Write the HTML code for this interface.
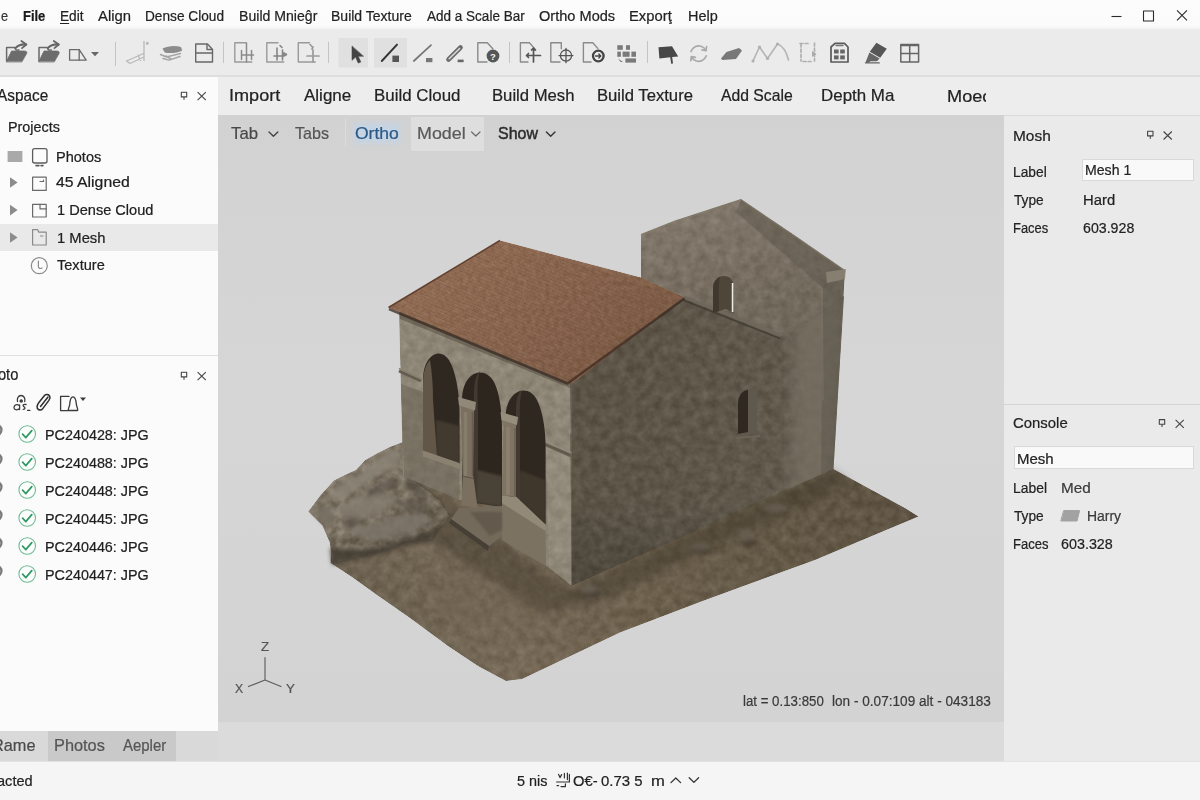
<!DOCTYPE html>
<html lang="en">
<head>
<meta charset="utf-8">
<title>Aspace - Photogrammetry</title>
<style>
*{box-sizing:border-box;margin:0;padding:0}
html,body{width:1200px;height:800px;overflow:hidden;background:#f1f1f1;font-family:"Liberation Sans","DejaVu Sans",sans-serif;color:#222}
.abs{position:absolute}
#app{position:relative;width:1200px;height:800px;overflow:hidden}
.t{position:absolute;white-space:nowrap;line-height:1;color:#262626;transform-origin:0 0;-webkit-text-stroke:0.22px currentColor}
#menubar{left:0;top:0;width:1200px;height:30px;background:linear-gradient(180deg,#fcfcfc 0,#fbfbfb 26px,#f4f4f4 28.5px,#ebebeb 30px)}
#toolbar{left:0;top:30px;width:1200px;height:47px;background:#ebebeb;border-bottom:2px solid #dedede}
#subbar{left:218px;top:77px;width:982px;height:38px;background:#ededed}
#left{left:0;top:77px;width:218px;height:654px;background:#fbfbfb}
#lefttabs{left:0;top:731px;width:218px;height:30px;background:#d9d9d9}
#viewport{left:218px;top:115px;width:786px;height:607px;background:linear-gradient(180deg,#d2d2d2 0%,#d6d6d6 45%,#d3d3d3 100%)}
#vpstrip{left:218px;top:722px;width:786px;height:39px;background:#dbdbdb}
#right{left:1004px;top:115px;width:196px;height:646px;background:#eaeaea;border-top:1px solid #dadada}
#status{left:0;top:761px;width:1200px;height:39px;background:#f5f5f5;border-top:1px solid #e2e2e2}
.inp{position:absolute;background:#f9f9f9;border:1px solid #d9d9d9}
#ico{position:absolute;left:0;top:0;width:1200px;height:800px;pointer-events:none}
</style>
</head>
<body>
<div id="app">
<!-- MENU BAR -->
<div id="menubar" class="abs"></div>
<div id="toolbar" class="abs"></div>
<span class="t" style="left:1.49px;top:7.55px;font-size:15.3px;transform:scaleX(0.8344);color:#333;">e</span>
<span class="t" style="left:23.16px;top:7.55px;font-size:15.3px;transform:scaleX(0.8473);color:#1a1a1a;font-weight:bold;">File</span>
<span class="t" style="left:59.61px;top:7.55px;font-size:15.3px;transform:scaleX(0.8914);color:#222;"><u style="text-decoration-thickness:1.3px;text-underline-offset:2px">E</u>dit</span>
<span class="t" style="left:98.00px;top:7.55px;font-size:15.3px;transform:scaleX(0.9683);color:#222;">Align</span>
<span class="t" style="left:144.91px;top:7.55px;font-size:15.3px;transform:scaleX(0.8931);color:#222;">Dense Cloud</span>
<span class="t" style="left:238.87px;top:7.55px;font-size:15.3px;transform:scaleX(0.9217);color:#222;">Build Mnie&#x11D;r</span>
<span class="t" style="left:330.88px;top:7.55px;font-size:15.3px;transform:scaleX(0.9163);color:#222;">Build Texture</span>
<span class="t" style="left:427.00px;top:7.55px;font-size:15.3px;transform:scaleX(0.8838);color:#222;">Add a Scale Bar</span>
<span class="t" style="left:539.34px;top:7.55px;font-size:15.3px;transform:scaleX(0.9528);color:#222;">Ortho Mods</span>
<span class="t" style="left:629.32px;top:7.55px;font-size:15.3px;transform:scaleX(0.9670);color:#222;">Expor&#x163;</span>
<span class="t" style="left:687.84px;top:7.55px;font-size:15.3px;transform:scaleX(0.9458);color:#222;">Help</span>
<!-- SUB BAR -->
<div id="subbar" class="abs"></div>
<span class="t" style="left:228.87px;top:87.31px;font-size:17px;transform:scaleX(1.0646);color:#222;">Import</span>
<span class="t" style="left:304.00px;top:87.31px;font-size:17px;transform:scaleX(1.0001);color:#222;">Aligne</span>
<span class="t" style="left:373.65px;top:87.31px;font-size:17px;transform:scaleX(0.9942);color:#222;">Build Cloud</span>
<span class="t" style="left:491.67px;top:87.31px;font-size:17px;transform:scaleX(0.9804);color:#222;">Build Mesh</span>
<span class="t" style="left:597.37px;top:87.31px;font-size:17px;transform:scaleX(0.9792);color:#222;">Build Texture</span>
<span class="t" style="left:721.00px;top:87.31px;font-size:17px;transform:scaleX(0.9250);color:#222;">Add Scale</span>
<span class="t" style="left:820.65px;top:87.31px;font-size:17px;transform:scaleX(0.9954);color:#222;">Depth Ma</span>
<div class="abs" style="left:0;top:77px;width:985.5px;height:38px;overflow:hidden"><div class="abs" style="left:0;top:-77px"><span class="t" style="left:947.05px;top:87.61px;font-size:17px;transform:scaleX(1.0684);color:#222;">Moec</span></div></div>
<!-- LEFT PANEL -->
<div id="left" class="abs">
  <div class="abs" style="left:0;top:147px;width:218px;height:27px;background:#e9e9e9"></div>
  <div class="abs" style="left:0;top:278px;width:218px;height:1px;background:#dfdfdf"></div>
</div>
<span class="t" style="left:-3.50px;top:87.29px;font-size:16.2px;transform:scaleX(0.9475);color:#1e1e1e;">Aspace</span>
<span class="t" style="left:8.25px;top:119.30px;font-size:15px;transform:scaleX(0.9576);color:#202020;">Projects</span>
<span class="t" style="left:55.84px;top:148.65px;font-size:15.3px;transform:scaleX(0.9499);color:#202020;">Photos</span>
<span class="t" style="left:56.28px;top:174.45px;font-size:15.3px;transform:scaleX(1.0321);color:#202020;">45 Aligned</span>
<span class="t" style="left:56.91px;top:202.45px;font-size:15.3px;transform:scaleX(0.9529);color:#202020;">1 Dense Cloud</span>
<span class="t" style="left:56.89px;top:229.65px;font-size:15.3px;transform:scaleX(0.9658);color:#202020;">1 Mesh</span>
<span class="t" style="left:57.31px;top:257.05px;font-size:15.3px;transform:scaleX(0.9514);color:#202020;">Texture</span>
<span class="t" style="left:-19.67px;top:365.89px;font-size:16.2px;transform:scaleX(0.9049);color:#1e1e1e;">Photo</span>
<span class="t" style="left:45.25px;top:427.05px;font-size:15.3px;transform:scaleX(0.9386);color:#202020;">PC240428: JPG</span>
<span class="t" style="left:45.25px;top:455.05px;font-size:15.3px;transform:scaleX(0.9386);color:#202020;">PC240488: JPG</span>
<span class="t" style="left:45.25px;top:483.05px;font-size:15.3px;transform:scaleX(0.9386);color:#202020;">PC240448: JPG</span>
<span class="t" style="left:45.25px;top:511.05px;font-size:15.3px;transform:scaleX(0.9386);color:#202020;">PC240445: JPG</span>
<span class="t" style="left:45.25px;top:539.05px;font-size:15.3px;transform:scaleX(0.9386);color:#202020;">PC240446: JPG</span>
<span class="t" style="left:45.25px;top:567.05px;font-size:15.3px;transform:scaleX(0.9386);color:#202020;">PC240447: JPG</span>
<div id="lefttabs" class="abs">
  <div class="abs" style="left:48px;top:0;width:128px;height:30px;background:#c9c9c9"></div>
</div>
<span class="t" style="left:-7.81px;top:737.12px;font-size:16.4px;transform:scaleX(0.9963);color:#4a4a4a;">Rame</span>
<span class="t" style="left:54.29px;top:737.12px;font-size:16.4px;transform:scaleX(0.9959);color:#555;">Photos</span>
<span class="t" style="left:123.00px;top:737.12px;font-size:16.4px;transform:scaleX(0.9120);color:#555;">Aepler</span>
<!-- VIEWPORT -->
<div id="viewport" class="abs">
  <div class="abs" style="left:192.5px;top:1.5px;width:73px;height:34px;background:#dedede"></div>
  <div class="abs" style="left:126.5px;top:4px;width:1px;height:28px;background:#dddddd"></div>
  <div class="abs" style="left:136px;top:8px;width:46px;height:20px;background:rgba(188,214,240,0.55);filter:blur(2.5px)"></div>
</div>
<div id="vpstrip" class="abs"></div>
<span class="t" style="left:230.66px;top:124.81px;font-size:17px;transform:scaleX(0.9867);color:#484848;">Tab</span>
<span class="t" style="left:295.38px;top:124.81px;font-size:17px;transform:scaleX(0.9446);color:#555;">Tabs</span>
<span class="t" style="left:354.91px;top:124.81px;font-size:17px;transform:scaleX(1.0303);color:#2a5987;">Ortho</span>
<span class="t" style="left:416.57px;top:124.81px;font-size:17px;transform:scaleX(1.0508);color:#5a5a5a;">Model</span>
<span class="t" style="left:497.98px;top:124.81px;font-size:17px;transform:scaleX(0.9397);color:#2c2c2c;-webkit-text-stroke:0.5px currentColor;">Show</span>
<span class="t" style="left:742.64px;top:692.75px;font-size:15.3px;transform:scaleX(0.8671);color:#3a3a3a;">lat = 0.13:850</span>
<span class="t" style="left:831.82px;top:692.75px;font-size:15.3px;transform:scaleX(0.8897);color:#3a3a3a;">lon - 0.07:109 alt - 043183</span>
<span class="t" style="left:260.60px;top:641.03px;font-size:12.6px;transform:scaleX(1.0534);color:#555;">Z</span>
<span class="t" style="left:235.39px;top:683.33px;font-size:12.6px;transform:scaleX(0.9729);color:#555;">X</span>
<span class="t" style="left:286.37px;top:683.33px;font-size:12.6px;transform:scaleX(1.0625);color:#555;">Y</span>
<!-- 3D MODEL -->
<svg class="abs" style="left:218px;top:115px;width:786px;height:607px" viewBox="218 115 786 607">
<defs>
  <filter id="nz" x="0" y="0" width="100%" height="100%" color-interpolation-filters="sRGB">
    <feTurbulence type="fractalNoise" baseFrequency="0.11" numOctaves="4" seed="7" result="n"/>
    <feColorMatrix in="n" type="matrix" values="1 0 0 0 0  1 0 0 0 0  1 0 0 0 0  0 0 0 0 1" result="g"/>
    <feComposite in="SourceGraphic" in2="g" operator="arithmetic" k1="0" k2="1" k3="0.15" k4="-0.075" result="m"/>
    <feComposite in="m" in2="SourceGraphic" operator="in"/>
  </filter>
  <filter id="nzfine" x="0" y="0" width="100%" height="100%" color-interpolation-filters="sRGB">
    <feTurbulence type="fractalNoise" baseFrequency="0.22" numOctaves="2" seed="3" result="n"/>
    <feColorMatrix in="n" type="matrix" values="1 0 0 0 0  1 0 0 0 0  1 0 0 0 0  0 0 0 0 1" result="g"/>
    <feComposite in="SourceGraphic" in2="g" operator="arithmetic" k1="0" k2="1" k3="0.12" k4="-0.06" result="m"/>
    <feComposite in="m" in2="SourceGraphic" operator="in"/>
  </filter>
  <filter id="nzrock" x="0" y="0" width="100%" height="100%" color-interpolation-filters="sRGB">
    <feTurbulence type="fractalNoise" baseFrequency="0.11" numOctaves="3" seed="11" result="n"/>
    <feColorMatrix in="n" type="matrix" values="1 0 0 0 0  1 0 0 0 0  1 0 0 0 0  0 0 0 0 1" result="g"/>
    <feComposite in="SourceGraphic" in2="g" operator="arithmetic" k1="0" k2="1" k3="0.3" k4="-0.15" result="m"/>
    <feComposite in="m" in2="SourceGraphic" operator="in"/>
  </filter>
  <filter id="soft"><feGaussianBlur stdDeviation="1.2"/></filter>
  <filter id="soft2"><feGaussianBlur stdDeviation="2"/></filter>
  <filter id="soft3"><feGaussianBlur stdDeviation="4"/></filter>
  <filter id="soft6"><feGaussianBlur stdDeviation="8"/></filter>
  <linearGradient id="gGround" x1="330" y1="560" x2="900" y2="500" gradientUnits="userSpaceOnUse">
    <stop offset="0" stop-color="#6c6150"/><stop offset="0.3" stop-color="#766957"/><stop offset="0.55" stop-color="#6c604d"/><stop offset="0.8" stop-color="#635846"/><stop offset="1" stop-color="#605544"/>
  </linearGradient>
  <linearGradient id="gFront" x1="0" y1="316" x2="0" y2="585" gradientUnits="userSpaceOnUse">
    <stop offset="0" stop-color="#8d8576"/><stop offset="0.45" stop-color="#8d8576"/><stop offset="1" stop-color="#877f70"/>
  </linearGradient>
  <linearGradient id="gSide" x1="570" y1="0" x2="836" y2="0" gradientUnits="userSpaceOnUse">
    <stop offset="0" stop-color="#5a5346"/><stop offset="0.5" stop-color="#5d5649"/><stop offset="1" stop-color="#625b4e"/>
  </linearGradient>
  <linearGradient id="gSideV" x1="0" y1="300" x2="0" y2="590" gradientUnits="userSpaceOnUse">
    <stop offset="0" stop-color="#000" stop-opacity="0"/><stop offset="0.7" stop-color="#000" stop-opacity="0"/><stop offset="1" stop-color="#000" stop-opacity="0.16"/>
  </linearGradient>
  <linearGradient id="gTower" x1="720" y1="200" x2="760" y2="340" gradientUnits="userSpaceOnUse">
    <stop offset="0" stop-color="#81776a"/><stop offset="0.4" stop-color="#7a7063"/><stop offset="0.75" stop-color="#736b5e"/><stop offset="1" stop-color="#6f685b"/>
  </linearGradient>
  <linearGradient id="gRoof" x1="470" y1="250" x2="600" y2="380" gradientUnits="userSpaceOnUse">
    <stop offset="0" stop-color="#946f57"/><stop offset="0.5" stop-color="#8a6750"/><stop offset="1" stop-color="#7f5e48"/>
  </linearGradient>
  <linearGradient id="gRock" x1="320" y1="460" x2="400" y2="560" gradientUnits="userSpaceOnUse">
    <stop offset="0" stop-color="#897f70"/><stop offset="0.5" stop-color="#7b7162"/><stop offset="1" stop-color="#675e50"/>
  </linearGradient>
  <pattern id="tiles" width="9" height="4" patternUnits="userSpaceOnUse" patternTransform="matrix(0.93 0.37 -0.86 0.52 0 0)">
    <path d="M0 0H9M0 0V2M4.5 2V4M0 2H9" stroke="#5e3a2a" stroke-width="0.5" fill="none" opacity="0.45"/>
  </pattern>
  <clipPath id="cpSide"><path d="M570 382 L684 296 L780 335 L806 322 L844 296 L833.5 469 L571 586 Z"/></clipPath>
</defs>

<!-- ground slab -->
<path d="M331 545 L330.5 563 L352 577 L377 595 L410 618 L448 646 L478 666 L506 681 L522 679 L560 661 L620 632.5 L700 602 L760 580 L815 560 L860 541 L918.5 516.5 L905 508 L870 489 L833.5 469 L700 420 L420 450 Z" fill="url(#gGround)" filter="url(#nz)"/>
<!-- darker soil near building -->
<path d="M404 474 L470 515 L545 575 L570 588 L833 470 L850 483 L600 602 L540 614 L430 540 L380 520 Z" fill="#383128" opacity="0.4" filter="url(#soft3)"/>
<path d="M450 560 L560 610 L520 650 L430 600 Z" fill="#6e614e" opacity="0.25" filter="url(#soft6)"/>
<!-- small stones -->
<g filter="url(#soft2)" opacity="0.75">
  <ellipse cx="592" cy="594" rx="9" ry="2.5" fill="#383128"/><ellipse cx="748" cy="543" rx="10" ry="3" fill="#3b342c"/><ellipse cx="702" cy="551" rx="11" ry="2.5" fill="#3d372d"/>
  <ellipse cx="590" cy="589" rx="8" ry="4" fill="#6b6356"/><ellipse cx="700" cy="546" rx="10" ry="4.5" fill="#655c50"/><ellipse cx="746" cy="535" rx="8" ry="6.5" fill="#675e51"/><ellipse cx="776" cy="508" rx="13" ry="4.5" fill="#6a6054"/>
</g>
<!-- rock outcrop -->
<path d="M308.4 511.6 L320 496 L334 480.5 L345 475 L356 470 L365.5 460 L378 453 L390 447 L403 442 L408 476 L440 500 L450 516 L446 522 L431 539 L405 543 L375 554 L352 558 L332 564 L330 543 L322.5 525.5 Z" fill="url(#gRock)" filter="url(#nzrock)"/>
<g filter="url(#soft2)" opacity="0.8">
  <path d="M326 498 L344 480 L362 473 L372 462 L392 450 L400 452 L396 466 L376 476 L360 488 L340 500 Z" fill="#8a8376"/>
  <path d="M336 508 L362 496 L384 492 L398 500 L380 514 L352 522 Z" fill="#847d70"/>
  <path d="M344 530 L372 524 L398 516 L420 512 L436 520 L412 532 L372 542 Z" fill="#7d766a"/>
  <path d="M312 512 L326 504 L334 516 L330 530 Z" fill="#766f63"/>
  <path d="M330 548 L352 550 L378 548 L404 540 L430 532 L440 526 L432 540 L404 546 L374 556 L350 560 L332 565 Z" fill="#3e372e"/>
  <path d="M366 490 L380 483 L394 478 L400 484 L388 490 L370 497 Z" fill="#554e44" opacity="0.8"/>
  <path d="M342 521 L356 516 L364 522 L350 528 Z" fill="#575047" opacity="0.8"/>
  <path d="M398 502 L420 498 L434 506 L418 512 L402 509 Z" fill="#5a5349" opacity="0.8"/>
  <path d="M405 472 L412 480 L428 493 L420 496 L405 485 Z" fill="#544d43" opacity="0.8"/>
</g>

<!-- side wall (long, darker) -->
<path d="M570 382 L684 296 L780 335 L806 322 L844 296 L833.5 469 L571 586 Z" fill="url(#gSide)" filter="url(#nz)"/>
<path d="M570 384 L684 297 L780 335 L844 296 L833.5 469 L571 586 Z" fill="url(#gSideV)"/>
<!-- lighter weathered right part of side wall -->
<g clip-path="url(#cpSide)"><path d="M792 318 L850 280 L840 430 L836 475 L790 500 Z" fill="#7a7265" opacity="0.75" filter="url(#soft6)"/></g>
<!-- tower (back gable wall), fades into side wall below the ledge -->
<path d="M641 234 L675 220.5 L741 199 L790 232 L845 270 L843.5 297 L806 323 L780 336 L684 297 L641 278 Z" fill="url(#gTower)" filter="url(#nz)"/>
<!-- tower right narrow face -->
<path d="M823 287 L845 270 L843 300 L833.5 469 L821 474 Z" fill="#585348" opacity="0.4"/>
<path d="M822 288 L823 400" stroke="#7d766a" stroke-width="1.6" opacity="0.45"/>
<!-- tower top rim -->
<path d="M641 235 L675 221.5 L741 200 L845 271" stroke="#857d6e" stroke-width="2" fill="none" stroke-linejoin="round" opacity="0.5"/>
<path d="M741 200 L845 271 L823 288 L736 212 Z" fill="#5d564b" opacity="0.45"/>
<path d="M826 272 L846 269 L845 279 L827 283 Z" fill="#8e8677" opacity="0.8"/>
<!-- ledge along side wall top -->
<path d="M684 297 L780 335 L806 322" stroke="#6f675a" stroke-width="3.4" fill="none" stroke-linejoin="round"/>
<path d="M684 300.5 L780 338.5" stroke="#3b362e" stroke-width="1.6" fill="none" opacity="0.7"/>
<!-- tower window -->
<path d="M713 313 V288 C713 279 719 276 724 276 C730 276 734 280 734 289 V313 L726 309 Z" fill="#4f463a"/>
<path d="M713 313 V290 C713 283 716 279 720 277 C718 284 719 300 719 311 Z" fill="#3d352b" opacity="0.8"/>
<path d="M732.6 283 V312" stroke="#ecebe4" stroke-width="1.7"/>
<!-- side window -->
<path d="M738 436 V404 C738 392 748 386 757 390 V434 Z" fill="#5f584d"/>
<path d="M738 434 V404 C738 394 744 390 748 390 V432 Z" fill="#2f2922"/>
<path d="M736 438 L760 436" stroke="#6a6458" stroke-width="2"/>

<!-- front wall -->
<path d="M399 310 L570 379 L571.7 586 L549 568 L502 540 L502 507 L459 500 L403 476 Z" fill="url(#gFront)" filter="url(#nz)"/>
<!-- shadow under eave -->
<path d="M400 311 L570 380 L570 388 L400 319 Z" fill="#484036" opacity="0.45"/>
<!-- lower-left darker zone -->
<path d="M401 384 L423 392 L423 452 L459.5 465 L459.5 500 L404 476 Z" fill="#655d50" opacity="0.5"/>
<!-- string course -->
<path d="M399 371 L421 381" stroke="#645c4e" stroke-width="3"/>
<path d="M399 368.5 L421 378.5" stroke="#888070" stroke-width="1.4"/>
<path d="M543 443.5 L571.7 456 L583 451" stroke="#5a5245" stroke-width="3" fill="none" stroke-linejoin="round" opacity="0.85"/>
<path d="M543 440.5 L571.7 453" stroke="#938b7b" stroke-width="1.6" fill="none" opacity="0.8"/>
<path d="M546 446 L571 457 L571.5 586 L549 568 Z" fill="#f5ead5" opacity="0.07"/>
<!-- arches (dark interiors) -->
<path d="M423 452 V380 C423 355 440 346 449 360 C456 372 459 392 459.5 410 V464 Z" fill="#2f2820"/>
<path d="M462 501 V400 C462 372 484 364 494 382 C500 394 502 412 502 432 V507 Z" fill="#2d261f"/>
<path d="M505.5 497 V418 C505.5 390 528 382 537 400 C543 412 545.6 430 545.6 448 V525 L516 497 Z" fill="#2f2820"/>
<!-- lighter lower interiors (back wall / floor glimpses) -->
<path d="M436 420 L459.5 426 V464 L436 456 Z" fill="#4a4136" opacity="0.75" filter="url(#soft)"/>
<path d="M477 470 L502 476 L502 507 L477 503 Z" fill="#51483c" opacity="0.8" filter="url(#soft)"/>
<path d="M519 470 L545.6 480 V525 L519 500 Z" fill="#463e33" opacity="0.7" filter="url(#soft)"/>
<!-- inner lit jambs of arches -->
<path d="M423 452 V384 C423 372 426 364 430 360 C432 372 433 385 433 400 L437 457 Z" fill="#64594b" opacity="0.95"/>
<path d="M474 503 V392 C474 384 476 374 480 371 C476 382 478 398 478 416 L478 504 Z" fill="#473f35" opacity="0.8"/>
<path d="M516 497 V410 C516 400 518 392 522 390 C519 400 520 416 520 432 L520 501 Z" fill="#473f36" opacity="0.8"/>
<!-- sill walls -->
<path d="M423 450.5 L459.5 463 L459.5 469 L423 456.5 Z" fill="#8a8171"/>
<path d="M502 502 L545.6 530 L546 566 L502 540 Z" fill="#7b7262"/>
<path d="M502 495.5 L516.5 497 L545.6 524.6 L545.6 531 L502 503 Z" fill="#928978"/>
<!-- threshold slab -->
<path d="M459 508 L502 506 L502 536 L489 546 L451 519 Z" fill="#746a5b"/>
<path d="M451 519 L489 546 L488 551 L449 523 Z" fill="#463f35"/>
<path d="M470 512 L502 512 L502 530 L490 536 Z" fill="#5c5347" opacity="0.7" filter="url(#soft)"/>
<!-- columns -->
<path d="M459.5 399 L474.5 403 L474 412 L473.3 476 L477.6 508 L461.6 505 L462.5 476 L461 411 Z" fill="#7b705f"/>
<path d="M458 397 L476 402 L475 410.5 L459 405.5 Z" fill="#91887a"/>
<path d="M462.5 476 L473.3 478.5" stroke="#5c5347" stroke-width="1.2"/>
<path d="M465.5 412 V476" stroke="#928876" stroke-width="3.4" opacity="0.55"/>
<path d="M472.6 412 V476" stroke="#564d41" stroke-width="1.6" opacity="0.5"/>
<path d="M502 414 L516.5 418 L516 428 L516 497 L502 495.5 L503.5 426 Z" fill="#7f7463"/>
<path d="M500.5 412 L518 417 L517 425 L501.5 420 Z" fill="#968d7c"/>
<path d="M508 427 V495" stroke="#958b78" stroke-width="3.4" opacity="0.55"/>
<path d="M515 428 V496" stroke="#564d41" stroke-width="1.6" opacity="0.5"/>
<!-- roof -->
<path d="M500 240.5 L388.5 307.5 L567.5 382 L572 384 L684.5 297 L641 277.5 Z" fill="url(#gRoof)" filter="url(#nzfine)"/>
<path d="M500 240.5 L388.5 307.5 L567.5 382 L684.5 297 Z" fill="url(#tiles)"/>
<!-- roof eave shadow edges -->
<path d="M389 309 L567.5 383.5 L684.5 298.5" stroke="#3b2920" stroke-width="2.6" fill="none" stroke-linejoin="round" opacity="0.75"/>
<path d="M500 240.5 L388.5 307.5" stroke="#614030" stroke-width="1.5" fill="none"/>
<!-- corner edge highlight -->
<path d="M571 388 V584" stroke="#898172" stroke-width="1.4" opacity="0.4"/>
</svg>
<!-- RIGHT PANEL -->
<div id="right" class="abs">
  <div class="abs" style="left:0;top:288px;width:196px;height:1px;background:#d4d4d4"></div>
</div>
<div class="inp" style="left:1082px;top:159px;width:112px;height:22px"></div>
<div class="inp" style="left:1014px;top:446px;width:180px;height:23px"></div>
<span class="t" style="left:1013.27px;top:128.08px;font-size:15.5px;transform:scaleX(0.9958);color:#222;">Mosh</span>
<span class="t" style="left:1013.40px;top:164.05px;font-size:15.3px;transform:scaleX(0.9008);color:#222;">Label</span>
<span class="t" style="left:1085.07px;top:162.05px;font-size:15.3px;transform:scaleX(0.9219);color:#222;">Mesh 1</span>
<span class="t" style="left:1014.23px;top:191.55px;font-size:15.3px;transform:scaleX(0.8932);color:#222;">Type</span>
<span class="t" style="left:1083.01px;top:191.55px;font-size:15.3px;transform:scaleX(0.9707);color:#222;">Hard</span>
<span class="t" style="left:1013.47px;top:220.25px;font-size:15.3px;transform:scaleX(0.8439);color:#222;">Faces</span>
<span class="t" style="left:1083.49px;top:220.25px;font-size:15.3px;transform:scaleX(0.9271);color:#222;">603.928</span>
<span class="t" style="left:1013.45px;top:414.88px;font-size:15.5px;transform:scaleX(0.9619);color:#222;">Console</span>
<span class="t" style="left:1016.80px;top:450.75px;font-size:15.3px;transform:scaleX(0.9804);color:#222;">Mesh</span>
<span class="t" style="left:1013.09px;top:480.05px;font-size:15.3px;transform:scaleX(0.9093);color:#222;">Label</span>
<span class="t" style="left:1061.28px;top:480.05px;font-size:15.3px;transform:scaleX(0.9985);color:#3a3a3a;">Med</span>
<span class="t" style="left:1013.93px;top:507.75px;font-size:15.3px;transform:scaleX(0.8964);color:#222;">Type</span>
<span class="t" style="left:1087.08px;top:507.75px;font-size:15.3px;transform:scaleX(0.9120);color:#3a3a3a;">Harry</span>
<span class="t" style="left:1013.16px;top:536.25px;font-size:15.3px;transform:scaleX(0.8514);color:#222;">Faces</span>
<span class="t" style="left:1061.28px;top:536.25px;font-size:15.3px;transform:scaleX(0.9364);color:#222;">603.328</span>
<!-- STATUS -->
<div id="status" class="abs"></div>
<span class="t" style="left:-23.65px;top:773.05px;font-size:15.3px;transform:scaleX(0.9510);color:#222;">Selacted</span>
<span class="t" style="left:516.82px;top:772.75px;font-size:15.3px;transform:scaleX(0.9410);color:#222;">5 nis</span>
<span class="t" style="left:573.04px;top:772.75px;font-size:15.3px;transform:scaleX(0.9638);color:#222;">O&#x20AC;-</span>
<span class="t" style="left:601.10px;top:772.75px;font-size:15.3px;transform:scaleX(0.9756);color:#222;">0.73 5</span>
<span class="t" style="left:650.92px;top:772.75px;font-size:15.3px;transform:scaleX(1.0847);color:#222;">m</span>
<!-- ICONS OVERLAY -->
<svg id="ico" viewBox="0 0 1200 800" fill="none" stroke-linecap="round" stroke-linejoin="round">
<!-- window controls -->
<g stroke="#2b2b2b" stroke-width="1.1" stroke-linecap="butt">
  <path d="M1111.5 16.5h10"/>
  <rect x="1143.5" y="11" width="10" height="10"/>
  <path d="M1177 10.3l10 10M1187 10.3l-10 10"/>
</g>
<!-- toolbar pressed buttons -->
<rect x="338.5" y="38" width="29.5" height="29.5" fill="#e0e0e0"/>
<rect x="374" y="38" width="33" height="29.5" fill="#e0e0e0"/>
<!-- toolbar separators -->
<g stroke="#c4c4c4" stroke-width="1" stroke-linecap="butt">
  <path d="M115.5 42v24M223.5 42v21M328.5 42v21M509.5 42v21M647.5 41v22"/>
</g>
<!-- 1,2 open folder icons -->
<g id="fold">
  <path d="M6.6 61V47.400h8l1.4 2.600h3" stroke="#6a6a6a" stroke-width="1.5"/>
  <path d="M6.4 61.600l5.2-10.600h12.400c2.4 0 3.4 1 2.6 2.600l-4.6 8z" fill="#6c6c6c" stroke="#6c6c6c" stroke-width="0.8"/>
  <path d="M15.5 48c3-3 6.5-3.8 10.5-3.5" stroke="#666" stroke-width="2.2"/>
  <path d="M21.4 41l5 3.5-4.4 3.6" stroke="#666" stroke-width="1.8"/>
</g>
<use href="#fold" x="32.4"/>
<!-- 3 square + triangle + dropdown -->
<g stroke="#6a6a6a" stroke-width="1.3">
  <path d="M69.6 49.6h9.6v10.6h-9.6z"/>
  <path d="M79.2 49.6l7 10.6h-7"/>
</g>
<path d="M91 52h8l-4 4.2z" fill="#666"/>
<!-- 4 light axis icon -->
<g stroke="#b9b9b9" stroke-width="1.3">
  <path d="M144 41.5v19M126.5 61l17-7.5M130 63.5l14-6.5M126.5 61l3.5 2.5M138 55l2.5 5.5"/>
  <circle cx="147.3" cy="43.3" r="0.9" fill="#aaa"/>
</g>
<!-- 5 stack -->
<path d="M162.5 48.5c5-2.8 13-3.4 18.5-1.6l1.2 3.6c-5 2.6-12 3.2-17.5 2z" fill="#8c8c8c"/>
<g stroke="#a5a5a5" stroke-width="1.5">
  <path d="M160.5 54.5l6 2.5 14-3.5M163 58.5l6 1.6 11-3.6M166 56l5 3"/>
</g>
<!-- 6 page/window -->
<g stroke="#686868" stroke-width="1.4">
  <path d="M195.7 46v16h16.8V49.5l-5-5.5H195.7z"/>
  <path d="M195.7 53h16.8M207 44.5v5h5"/>
</g>
<!-- 7-9 pages with marks -->
<g id="pg" stroke="#9a9a9a" stroke-width="1.4">
  <path d="M246 42.8h-11.2v19.2h17"/>
</g>
<g stroke="#8a8a8a" stroke-width="1.5">
  <path d="M246.5 43v19M241.5 50.5v9M251.5 50.5v9M241.5 55h12"/>
</g>
<use href="#pg" x="32"/>
<g stroke="#858585" stroke-width="1.6">
  <path d="M277 48v12M282.5 50v10M274 56h9M280 45.5l2 2M284 53l2.5 1.5-2.5 1.5z" />
</g>
<use href="#pg" x="63.5"/>
<g stroke="#9a9a9a" stroke-width="1.7">
  <path d="M313 50v12M307 56h12M310 44.5l2.5 2.5M313 47l-1 2"/>
</g>
<!-- 10 cursor -->
<path d="M352 46.3v14l3.6-3.2 2.6 6 2.6-1.1-2.6-5.8h5z" fill="#444" stroke="#444" stroke-width="0.6"/>
<!-- 11 line + square -->
<path d="M381.8 61L397 44.6" stroke="#333" stroke-width="1.9"/>
<rect x="392.4" y="55.6" width="6.6" height="6.4" fill="#555"/>
<!-- 12 line + square lighter -->
<path d="M413.8 61L431 45.2" stroke="#777" stroke-width="1.7"/>
<rect x="426" y="58" width="6.4" height="4.2" fill="#777"/>
<!-- 13 pencil -->
<path d="M448.5 59.5L460.5 47.5" stroke="#6c6c6c" stroke-width="4.6"/>
<path d="M449.2 58.8L459.6 48.4" stroke="#dcdcdc" stroke-width="1.4"/>
<rect x="457.6" y="59.6" width="6" height="2.6" fill="#666"/>
<!-- 14 page + ? -->
<g stroke="#8a8a8a" stroke-width="1.4">
  <path d="M487 62h-9.2V42.8h9.5l5.5 6"/>
</g>
<circle cx="493" cy="56" r="6.4" fill="#565656"/>
<text x="493" y="59.6" font-family="Liberation Sans, sans-serif" font-size="9.5" font-weight="bold" fill="#f2f2f2" stroke="none" text-anchor="middle">?</text>
<!-- 15 page + cross arrows -->
<g stroke="#8a8a8a" stroke-width="1.4">
  <path d="M528 62h-7.6V42.8h9l5 5.6v2"/>
</g>
<g stroke="#555" stroke-width="1.7">
  <path d="M533.5 48v14M526.5 55.5h14M531.5 50l2-2 2 2M528.5 53.5l-2 2 2 2"/>
</g>
<!-- 16 page + crosshair -->
<g stroke="#8a8a8a" stroke-width="1.4">
  <path d="M560 62h-9.2V42.8h10.5v6"/>
</g>
<g stroke="#555" stroke-width="1.3">
  <circle cx="566" cy="55.6" r="5.6"/>
  <path d="M566 48.5v14.2M559 55.6h14"/>
</g>
<!-- 17 page + circled arrow -->
<g stroke="#8a8a8a" stroke-width="1.4">
  <path d="M591 62h-7.6V42.8h9.4l5 5.6"/>
</g>
<circle cx="598.3" cy="56" r="5.3" stroke="#444" stroke-width="2.3" fill="#eee"/>
<path d="M595.5 56h5M598.8 54l2 2-2 2" stroke="#444" stroke-width="1.3"/>
<!-- 18 blocks -->
<g fill="#7a7a7a">
  <rect x="617.3" y="45.2" width="5.5" height="4.6"/>
  <rect x="626" y="45.2" width="4" height="4.6"/>
  <rect x="617.3" y="51.6" width="3.6" height="5.2"/>
  <rect x="622.6" y="51.6" width="7" height="5.2"/>
  <rect x="631.4" y="51.6" width="4.6" height="5.2"/>
  <rect x="625.4" y="58.4" width="10.6" height="4.2"/>
  <path d="M618 58.6l5 3.4h-2.4z"/>
</g>
<!-- 19 flag -->
<path d="M658.5 47.2l13.5-1 6.2 10.4-6 .4.8 6.6-1.8.2-1-6.6-10.8 1.4z" fill="#474747"/>
<!-- 20 refresh -->
<g stroke="#a9a9a9" stroke-width="1.7">
  <path d="M691 51.5c1.6-4.5 6-6.5 10-5.2 2.2.7 3.8 2.2 4.8 4"/>
  <path d="M706.3 55.8c-1.6 4.5-6 6.5-10 5.2-2.2-.7-3.8-2.2-4.8-4"/>
  <path d="M706.6 46.6l-.6 4-4-.7M690.8 60.6l.6-4 4 .7"/>
</g>
<!-- 21 blob -->
<path d="M721 58.6l5.5-6.6 12.5-4 3 2.4-6 8.6-13.6 1z" fill="#787878"/>
<!-- 22 polyline light -->
<g stroke="#b6b6b6" stroke-width="1.7">
  <path d="M753 61l6.5-14 8 11.5 10-14.5c6 2 9 8 11 16"/>
</g>
<g fill="#b0b0b0"><circle cx="753" cy="61" r="1.6"/><circle cx="759.5" cy="47" r="1.6"/><circle cx="767.5" cy="58.5" r="1.6"/><circle cx="777.5" cy="44" r="1.6"/></g>
<!-- 23 dashed light -->
<g stroke="#b0b0b0" stroke-width="1.7" stroke-dasharray="3 2.2">
  <path d="M800 43.5h8M801 44v17M803 61.5h8M814.5 43v18"/>
</g>
<path d="M812 51l4.5 3-4.5 3z" fill="#aaa"/>
<!-- 24 grid calc -->
<g stroke="#5a5a5a" stroke-width="1.7">
  <path d="M831 62V47l4-3.6h9.5l3.5 3.6v15z"/>
</g>
<g fill="#666">
  <rect x="834" y="49.5" width="4.6" height="4"/><rect x="840.2" y="49.5" width="4.6" height="4"/>
  <rect x="834" y="55.4" width="4.6" height="4"/><rect x="840.2" y="55.4" width="4.6" height="4"/>
</g>
<path d="M836 45.5h7" stroke="#777" stroke-width="1.4"/>
<!-- 25 marker -->
<path d="M876.4 42.8l10.4 6-6.6 9-10.4-6z" fill="#565656"/>
<path d="M869.4 52.4l10.2 6-2.6 2.8h-6.4l-2.2 1.6h-3z" fill="#666"/>
<path d="M865.4 62.8h14" stroke="#666" stroke-width="1.2"/>
<!-- 26 grid -->
<g stroke="#666" stroke-width="1.5" stroke-linecap="butt">
  <rect x="900.8" y="44.4" width="17.8" height="17.6"/>
  <path d="M909.7 44.4v17.6M900.8 53.4h17.8M900.8 45.6h17.8"/>
</g>
<!-- panel pin + close icons -->
<g id="pin" stroke="#444" stroke-width="1.1" stroke-linecap="butt">
  <rect x="181.3" y="92.3" width="5.4" height="4.6"/>
  <path d="M184 97v2.8"/>
</g>
<g id="cls" stroke="#444" stroke-width="1.1" stroke-linecap="butt">
  <path d="M197.6 92.2l8.2 8M205.8 92.2l-8.2 8"/>
</g>
<use href="#pin" y="280"/><use href="#cls" y="280"/>
<use href="#pin" x="966.3" y="39"/><use href="#cls" x="966" y="39.3"/>
<use href="#pin" x="978" y="327.3"/><use href="#cls" x="978" y="327.6"/>
</svg>
<!-- ICONS OVERLAY 2: tree, photo list, chevrons, gizmo, status -->
<svg class="abs" style="left:0;top:0;width:1200px;height:800px;pointer-events:none" viewBox="0 0 1200 800" fill="none" stroke-linecap="round" stroke-linejoin="round">
<!-- tree -->
<rect x="7.6" y="151" width="14.8" height="11" fill="#a9a9a9"/>
<g stroke="#5c5c5c" stroke-width="1.3">
  <rect x="32.6" y="148.6" width="14.4" height="14.4" rx="2"/>
  <path d="M36 165.6h3M41 165.6h2" stroke-width="1.6"/>
</g>
<g fill="#8c8c8c">
  <path d="M10 177.2l7.6 5.3-7.6 5.3z"/>
  <path d="M10 204.8l7.6 5.3-7.6 5.3z"/>
  <path d="M10 232.2l7.6 5.3-7.6 5.3z"/>
</g>
<g stroke="#6a6a6a" stroke-width="1.2">
  <rect x="32.6" y="177.2" width="13.6" height="13.2"/>
  <path d="M40 181.5h3.5v-1.5" />
  <rect x="32.6" y="204.4" width="13.6" height="12.6"/>
  <path d="M40 204.4v4.4h6.2"/>
</g>
<g stroke="#8a8a8a" stroke-width="1.2">
  <path d="M32.6 245v-15.4h5l1.2 2.6h7.4v12.8z"/>
  <path d="M40.5 236h2.5"/>
</g>
<g stroke="#8a8a8a" stroke-width="1.2">
  <circle cx="39.3" cy="265.7" r="8"/>
  <path d="M38.4 261v5.6c0 1.8 2 2.4 3.6 1.4"/>
</g>
<!-- photo pane mini toolbar -->
<g stroke="#3c3c3c" stroke-width="1.3">
  <path d="M17.5 401.5c-.8-3 .8-6 3.6-6s4.4 3 3.6 6"/>
  <circle cx="21.2" cy="401" r="1.1" fill="#3c3c3c"/>
  <path d="M19.6 405.600c-2.6-1.8-5.6-.8-5.6 1.800s3.2 3.2 5.6 1.200v-3.600M19.6 409v.6M26 404.500c-2.6-.6-3.6.8-2.2 1.900s2 2.7-.6 3M27.5 410.400h2.4"/>
</g>
<g stroke="#2f2f2f" stroke-width="1.5">
  <path d="M38.5 409.500c-2.2-1-1.6-4 .2-6.800l5.6-7c1.7-1.8 4.4-1.3 5.4.5.8 1.4.2 2.8-.8 4.200l-6 8c-1.4 1.7-3 1.9-4.4 1.100z"/>
  <path d="M40.5 406.500l7.5-9.5"/>
</g>
<g stroke="#3a3a3a" stroke-width="1.3">
  <path d="M60.6 396.400h8.400M60.6 396.400v14.200h16.8"/>
  <path d="M68.4 410.400v-1.200c.3-2 1-2.4 1.3-4.8.3-4.6 1.6-7.6 3.3-7.600s3 3 3.4 7.600c.2 2.4 1 2.8 1.2 4.800v1.200z"/>
</g>
<path d="M80 397.600h6l-3 3.400z" fill="#3a3a3a"/>
<!-- clipped radio circles at far left -->
<g stroke="#7c7c7c" stroke-width="2.4">
  <circle cx="-3.6" cy="430" r="5"/><circle cx="-3.6" cy="459" r="5"/><circle cx="-3.6" cy="487" r="5"/>
  <circle cx="-3.6" cy="515" r="5"/><circle cx="-3.6" cy="543" r="5"/><circle cx="-3.6" cy="571" r="5"/>
</g>
<!-- check circles -->
<g id="chk">
  <circle cx="27.2" cy="434" r="8.3" stroke="#6dbb93" stroke-width="1.1" fill="#fdfdfd"/>
  <path d="M22.6 434.200l3.2 3.4 6-7" stroke="#2f9a62" stroke-width="1.7"/>
</g>
<use href="#chk" y="28"/><use href="#chk" y="56"/><use href="#chk" y="84"/><use href="#chk" y="112"/><use href="#chk" y="140"/>
<!-- viewport toolbar chevrons -->
<g stroke="#444" stroke-width="1.4">
  <path d="M269 132l4.4 4.2 4.4-4.2"/>
</g>
<path d="M471.6 132l4.2 4 4.2-4" stroke="#6a6a6a" stroke-width="1.2"/>
<path d="M546.4 132l4.3 4.2 4.3-4.2" stroke="#333" stroke-width="1.4"/>
<!-- gizmo -->
<g stroke="#5a5a5a" stroke-width="1.1">
  <path d="M265 657.500v22.500l-16.6 6.600M265 680l16 6.6"/>
</g>
<!-- right panel parallelogram -->
<path d="M1064 510.600h15.600l-2.6 10.400h-15.800z" fill="#a2a2a2" stroke="#a2a2a2" stroke-width="1"/>
<!-- status icons -->
<g stroke="#333" stroke-width="1.2">
  <path d="M558.6 774.400l1.4 3.2 1.6-3M564.4 773.400v4.600M567.4 773v6.600M569.4 774.400v7.600h-12.800M557 785.600h1.600M561 786.600h4.400v-2.8"/>
</g>
<g stroke="#333" stroke-width="1.3">
  <path d="M671 782.600l4.8-4.6 4.8 4.600M689.2 777.800l4.7 4.6 4.7-4.6"/>
</g>
</svg>
</div>
</body>
</html>
